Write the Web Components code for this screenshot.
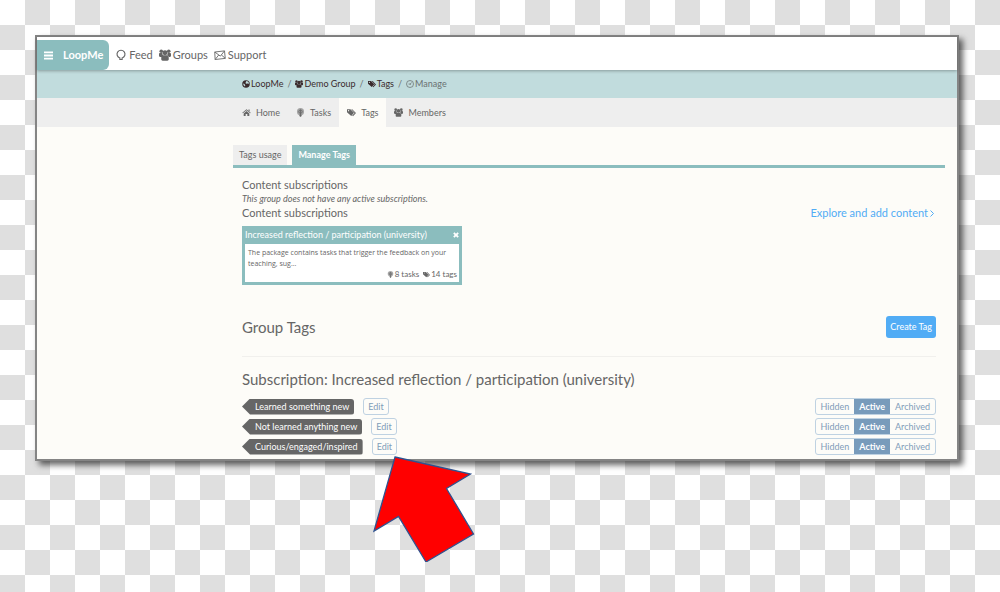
<!DOCTYPE html>
<html lang="en">
<head>
<meta charset="utf-8">
<title>LoopMe – Manage Tags</title>
<style>
  html { min-height: 100%; background: conic-gradient(#dfdfdf 25%, #fff 0 50%, #dfdfdf 0 75%, #fff 0) 0 0 / 50px 50px; }
  body { margin: 0; padding: 35px 41px 131px 35px; position: relative; color: #666; font: 9px/12px Lato, "Open Sans", sans-serif; }
</style>
</head>
<body>
<loop-window>
  <loop-topbar></loop-topbar>
  <loop-breadcrumbs></loop-breadcrumbs>
  <loop-nav></loop-nav>
  <loop-tags-page></loop-tags-page>
</loop-window>
<loop-pointer></loop-pointer>

<script>
const define = (name, html, setup) => {
  const tpl = document.createElement('template');
  tpl.innerHTML = `<style>*{box-sizing:border-box}a{color:inherit;text-decoration:none}button{font:inherit;color:inherit;margin:0;cursor:pointer}</style>${html}`;
  customElements.define(name, class extends HTMLElement {
    constructor() {
      super();
      this.attachShadow({ mode: 'open' }).append(tpl.content.cloneNode(true));
    }
    connectedCallback() { if (setup) setup(this, this.shadowRoot); }
  });
};

const icons = {
  bars: '<path d="M0 1h16v3.200H0zM0 6.400h16v3.200H0zM0 11.800h16V15H0z"/>',
  bulb: '<path fill="none" stroke="currentColor" stroke-width="1.500" d="M6.500 12A5.300 5.300 0 1 1 9.500 12V14h-3z"/>',
  users: '<circle cx="3" cy="3" r="2.400"/><circle cx="13" cy="3" r="2.400"/><circle cx="8" cy="5" r="3.300"/><path d="M0 6.500C0 5.500 1 5 2 5.300h2.500C4.500 7 5 8 5.500 8.800 4.500 9 3.800 9.500 3.300 10.500H1.500C.5 10.500 0 9.800 0 9zM16 6.500c0-1-1-1.500-2-1.200h-2.500c0 1.700-.5 2.700-1 3.500 1 .2 1.700.7 2.200 1.700h1.800c1 0 1.500-.7 1.500-1.500zM3 12c0-2.500 1-3.600 2.500-3.600h5c1.500 0 2.500 1.100 2.500 3.600v1.800c0 1-.8 1.700-1.800 1.700H4.800c-1 0-1.800-.7-1.800-1.700z"/>',
  mail: '<path fill="none" stroke="currentColor" stroke-width="1.200" d="M1 4l13-1.500 1 10L1.500 14zM1 4l7.500 5.500L14 2.500M1.500 14l4.800-6M15 12.500L10 8"/>',
  globe: '<circle cx="8" cy="8" r="7.500"/><path fill="#c1dcdd" d="M8.500 2L12 3l2 3-1.500 2L10 6.500 8.500 8 7 6zM2 7l3 1 1.500 2.500L6 13 3.500 11z"/>',
  tags: '<path fill-rule="evenodd" d="M0 2h6l6.500 6.500L7.500 14 0 7.500zM2.800 3.700a1.100 1.100 0 1 0 0 2.200 1.100 1.100 0 0 0 0-2.200z"/><path d="M7.500 2h1.800L16 9l-5.300 5.500-1.500-1.200L13.500 9z"/>',
  clock: '<g fill="none" stroke="currentColor" stroke-width="1.500"><circle cx="8" cy="8" r="7"/><path d="M5 8h3.500l2.500-3M8 8l1 2"/></g>',
  home: '<path d="M8 2l7.500 6.500-1 1L8 4 1.500 9.500l-1-1zM11.500 2.500h2V6l-2-1.600zM8 5.300l5 4.300V14H9.500v-3.500h-3V14H3V9.600z"/>',
  pin: '<circle cx="8" cy="6.500" r="6.300" opacity=".55"/><g fill="none" stroke="currentColor" stroke-width="1.500"><circle cx="8" cy="6.500" r="3"/><path d="M8 3v10"/></g><path d="M5.500 12h5L9 15.500H7z"/>',
  close: '<path d="M4 0.500L8 4.500l4-4 3.500 3.500L11.500 8l4 4-3.500 3.500-4-4-4 4L.5 12l4-4-4-4z"/>',
  chevron: '<path fill="none" stroke="currentColor" stroke-width="2" d="M5 3l6 6-6 6"/>'
};
define('loop-icon', `<style>:host{display:inline-flex;flex:none;width:8px;height:8px}svg{width:100%;height:100%;display:block}</style>
<svg viewBox="0 0 16 16" fill="currentColor" aria-hidden="true"></svg>`,
  (el, root) => { root.querySelector('svg').innerHTML = icons[el.getAttribute('name')]; });

define('loop-window', `<style>
  :host{display:block;border:2px solid #848484;background:#fdfcf8;box-shadow:4px 4px 6px rgba(0,0,0,.6)}
</style><slot></slot>`);

define('loop-topbar', `<style>
  :host{display:block;background:#fff;padding-top:3px;font-size:11px;line-height:16px;position:relative;box-shadow:0 1px 3px rgba(0,0,0,.3)}
  nav{display:flex;align-items:center;height:30px;gap:6px}
  a{display:flex;align-items:center;gap:2px}
  .brand{align-self:stretch;background:#8bbdbe;color:#fff;font-weight:700;border-radius:0 6px 6px 0;padding:0 6px 0 7px;gap:10px}
  .brand loop-icon{width:9px;height:9px}
  .link loop-icon{width:12px;height:12px}
</style>
<nav aria-label="Main">
  <a class="brand" href="#"><loop-icon name="bars"></loop-icon>LoopMe</a>
  <a class="link" href="#feed"><loop-icon name="bulb"></loop-icon>Feed</a>
  <a class="link" href="#groups"><loop-icon name="users"></loop-icon>Groups</a>
  <a class="link" href="#support"><loop-icon name="mail"></loop-icon>Support</a>
</nav>`);

define('loop-breadcrumbs', `<style>
  :host{display:block;background:#c1dcdd;padding-left:205px}
  nav{display:flex;align-items:center;height:28px;gap:4px;color:#6b7172}
  a{display:flex;align-items:center;gap:1px;color:#3b2b2d}
  a:last-child{color:#6b7172}
</style>
<nav aria-label="Breadcrumb">
  <a href="#"><loop-icon name="globe"></loop-icon>LoopMe</a><span>/</span>
  <a href="#group"><loop-icon name="users"></loop-icon>Demo Group</a><span>/</span>
  <a href="#tags"><loop-icon name="tags"></loop-icon>Tags</a><span>/</span>
  <a href="#manage"><loop-icon name="clock"></loop-icon>Manage</a>
</nav>`);

define('loop-nav', `<style>
  :host{display:block;background:#eee;padding-left:197px}
  nav{display:flex;height:29px}
  a{display:flex;align-items:center;gap:5px;padding:0 8px}
  a.on{background:#fdfcf8}
  loop-icon{width:9px;height:9px}
</style>
<nav aria-label="Group">
  <a href="#home"><loop-icon name="home"></loop-icon>Home</a>
  <a href="#tasks"><loop-icon name="pin"></loop-icon>Tasks</a>
  <a class="on" href="#tags" aria-current="page"><loop-icon name="tags"></loop-icon>Tags</a>
  <a href="#members"><loop-icon name="users"></loop-icon>Members</a>
</nav>`);

define('loop-package', `<style>
  :host{display:block;width:220px;border:3px solid #8bbdbe;background:#fff;font-size:8px;line-height:11px}
  header{display:flex;justify-content:space-between;align-items:center;background:#8bbdbe;color:#fff;font-size:9px;height:15px;line-height:12px;padding-bottom:3px}
  h3{margin:0;font:inherit}
  button{display:flex;border:0;padding:0;background:none}
  button loop-icon{width:6px;height:6px}
  p{margin:0;padding:3px;font-family:"Open Sans",sans-serif;font-size:7px}
  footer{display:flex;justify-content:flex-end;gap:4px;padding:0 2px 2px;margin-top:-3px}
  footer span{display:flex;align-items:center;gap:1px}
  footer loop-icon{width:7px;height:7px}
</style>
<header><h3><slot name="title"></slot></h3><button aria-label="Remove"><loop-icon name="close"></loop-icon></button></header>
<p><slot></slot></p>
<footer><span><loop-icon name="pin"></loop-icon><slot name="tasks"></slot></span><span><loop-icon name="tags"></loop-icon><slot name="tags"></slot></span></footer>`);

define('loop-status', `<style>
  :host{display:flex;border:1px solid #bfd2e2;border-radius:3px;overflow:hidden;color:#819db8;height:17px}
  button{border:0;padding:0 5px;background:none;line-height:15px}
  button[aria-pressed=true]{background:#789bbb;color:#fff;font-weight:700}
</style>
<button aria-pressed="false">Hidden</button><button aria-pressed="true">Active</button><button aria-pressed="false">Archived</button>`);

define('loop-tag-row', `<style>
  :host{display:flex;align-items:center;height:17px}
  .tag{background:#666;color:#fff;line-height:16px;padding:0 5px 0 13px;border-radius:0 3px 3px 0;clip-path:polygon(0 50%,8px 0,100% 0,100% 100%,8px 100%);margin-right:9px}
  .edit{border:1px solid #bfd2e2;border-radius:3px;background:none;color:#819db8;padding:0 4px;line-height:15px;height:17px}
  loop-status{margin-left:auto}
</style>
<span class="tag"><slot></slot></span><button class="edit">Edit</button><loop-status></loop-status>`);

define('loop-tags-page', `<style>
  :host{display:block;padding:18px 12px 4px 196px}
  .tabs{display:flex;gap:5px;border-bottom:3px solid #8bbdbe}
  .tabs a{background:#eee;padding:0 6px;line-height:20px}
  .tabs a.on{background:#8bbdbe;color:#fff;font-weight:700}
  main{padding:10px 9px 0}
  h2,h3,p{margin:0;font-weight:400}
  h3{font-size:11px;line-height:14px}
  .none{font-style:italic;line-height:14px}
  .bar{display:flex;justify-content:space-between;align-items:center}
  .more{display:flex;align-items:center;color:#51acf5;font-size:11px;line-height:14px}
  .more loop-icon{width:8px;height:8px}
  loop-package{margin:6px 0 31px}
  h2{font-size:15px;line-height:18px}
  .create{border:0;border-radius:3px;background:#51acf5;color:#fff;height:22px;padding:0 4px}
  hr{border:0;border-top:1px solid #f1f0ed;margin:18px 0 13px}
  .rows{display:grid;gap:3px;margin-top:10px}
</style>
<nav class="tabs" aria-label="Tags"><a href="#usage">Tags usage</a><a class="on" href="#manage" aria-current="page">Manage Tags</a></nav>
<main>
  <h3>Content subscriptions</h3>
  <p class="none">This group does not have any active subscriptions.</p>
  <div class="bar"><h3>Content subscriptions</h3><a class="more" href="#explore">Explore and add content<loop-icon name="chevron"></loop-icon></a></div>
  <loop-package>
    <span slot="title">Increased reflection / participation (university)</span>
    The package contains tasks that trigger the feedback on your teaching, sug...
    <span slot="tasks">8 tasks</span><span slot="tags">14 tags</span>
  </loop-package>
  <div class="bar"><h2>Group Tags</h2><button class="create">Create Tag</button></div>
  <hr>
  <h2>Subscription: Increased reflection / participation (university)</h2>
  <div class="rows">
    <loop-tag-row>Learned something new</loop-tag-row>
    <loop-tag-row>Not learned anything new</loop-tag-row>
    <loop-tag-row>Curious/engaged/inspired</loop-tag-row>
  </div>
</main>`);

define('loop-pointer', `<style>
  :host{position:absolute;left:372px;top:454px;width:104px;height:108px;overflow:hidden;pointer-events:none}
  svg{display:block}
</style>
<svg width="104" height="110" viewBox="0 0 104 110" aria-hidden="true"><path fill="#f00" stroke="#2f528f" stroke-width="1.300" d="M23 3L98.500 20 74.500 34.500 101.500 80 54 108 26.500 62.500 2 77z"/></svg>`);
</script>
</body>
</html>
